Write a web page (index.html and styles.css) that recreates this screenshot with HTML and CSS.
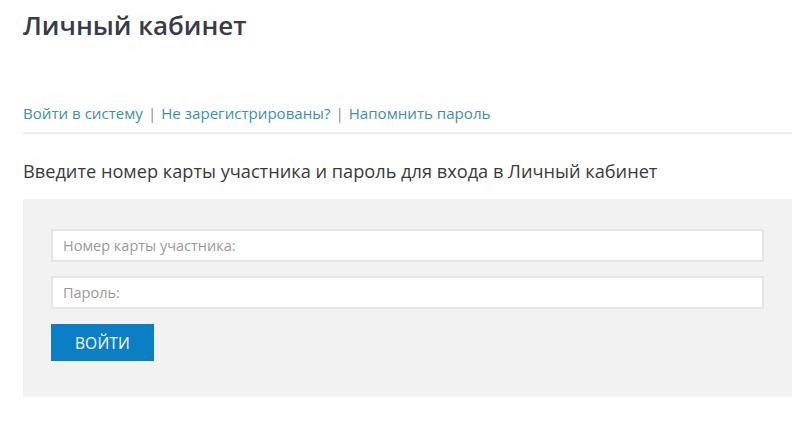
FILE: index.html
```html
<!DOCTYPE html>
<html lang="ru">
<head>
<meta charset="utf-8">
<title>Личный кабинет</title>
<link rel="stylesheet" href="styles.css">
</head>
<body>
<div class="page">
  <h1 class="title">Личный кабинет</h1>
  <nav class="tabs">
    <a href="#" class="tab">Войти в систему</a><span class="sep">|</span><a href="#" class="tab">Не зарегистрированы?</a><span class="sep">|</span><a href="#" class="tab">Напомнить пароль</a>
  </nav>
  <p class="intro">Введите номер карты участника и пароль для входа в Личный кабинет</p>
  <form class="login-box">
    <input class="field" type="text" placeholder="Номер карты участника:">
    <input class="field" type="password" placeholder="Пароль:">
    <button class="btn" type="button">ВОЙТИ</button>
  </form>
</div>
</body>
</html>
```
FILE: styles.css
```css
* { box-sizing: border-box; }
html, body { margin: 0; padding: 0; background: #fff; }
body { font-family: "Open Sans", "Liberation Sans", sans-serif; color: #333; }
.page { padding: 0 8px 0 23px; }
.title {
  margin: 0;
  padding-top: 6px;
  font-size: 26px;
  font-weight: 600;
  line-height: 38px;
  color: #383b48;
}
.tabs {
  margin-top: 57px;
  padding-bottom: 7px;
  border-bottom: 2px solid #ebebeb;
  font-size: 15.1px;
  line-height: 24px;
}
.tab { color: #3e8fa9; text-decoration: none; }
.sep { color: #8a8a8a; margin: 0 5px; }
.intro {
  margin: 23px 0 0;
  font-size: 18.2px;
  line-height: 28px;
  color: #3a3a3a;
}
.login-box {
  margin-top: 14px;
  background: #f2f2f2;
  padding: 30px 28px 36px 28px;
  display: flex;
  flex-direction: column;
  align-items: flex-start;
  gap: 14px;
}
.field {
  width: 100%;
  height: 33px;
  border: 2px solid #e6e6e6;
  background: #fff;
  padding: 0 10px;
  font-family: inherit;
  font-size: 14.5px;
  color: #333;
  outline: none;
}
.field::placeholder { color: #9a9a9a; }
.btn {
  margin-top: 1px;
  width: 103px;
  height: 37px;
  border: 0;
  background: #0a7fc3;
  color: #fff;
  font-family: inherit;
  font-size: 15.5px;
  letter-spacing: 0.2px;
  cursor: pointer;
}
```
